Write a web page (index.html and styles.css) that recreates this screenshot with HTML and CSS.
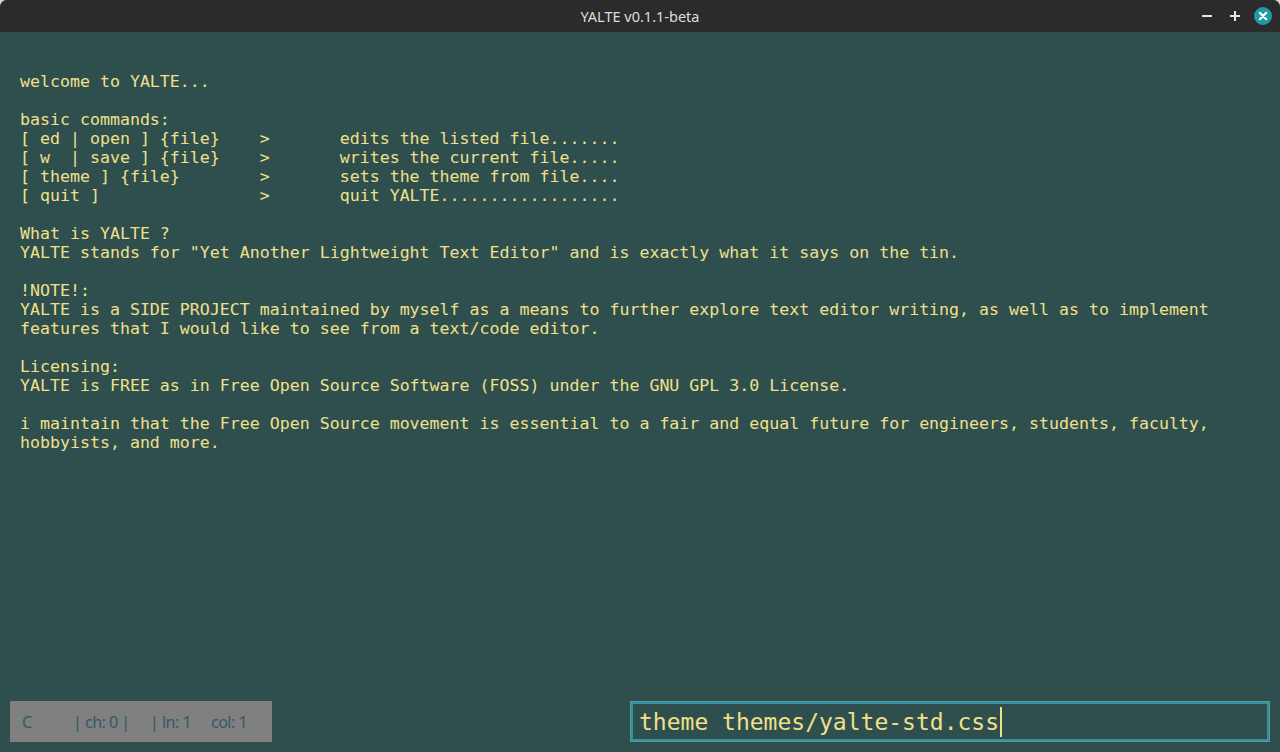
FILE: index.html
```html
<!DOCTYPE html>
<html>
<head>
<meta charset="utf-8">
<title>YALTE v0.1.1-beta</title>
<link rel="stylesheet" href="styles.css">
</head>
<body>
<div class="window">
  <header class="titlebar">
    <span class="title">YALTE v0.1.1-beta</span>
    <div class="controls">
      <span class="ctl minimize"><svg width="12" height="12" viewBox="0 0 12 12"><rect x="1" y="5" width="10" height="2" fill="#e6e6e6"/></svg></span>
      <span class="ctl maximize"><svg width="12" height="12" viewBox="0 0 12 12"><rect x="1" y="5" width="10" height="2" fill="#e6e6e6"/><rect x="5" y="1" width="2" height="10" fill="#e6e6e6"/></svg></span>
      <span class="ctl close"><svg width="18" height="18" viewBox="0 0 18 18"><circle cx="9" cy="9" r="9" fill="#1f9aa8"/><path d="M5.8 5.8 L12.2 12.2 M12.2 5.8 L5.8 12.2" stroke="#ffffff" stroke-width="2.2" stroke-linecap="round"/></svg></span>
    </div>
  </header>
  <main class="editor"><div class="buffer">welcome to YALTE...

basic commands:
[ ed | open ] {file}    >       edits the listed file.......
[ w  | save ] {file}    >       writes the current file.....
[ theme ] {file}        >       sets the theme from file....
[ quit ]                >       quit YALTE..................

What is YALTE ?
YALTE stands for "Yet Another Lightweight Text Editor" and is exactly what it says on the tin.

!NOTE!:
YALTE is a SIDE PROJECT maintained by myself as a means to further explore text editor writing, as well as to implement
features that I would like to see from a text/code editor.

Licensing:
YALTE is FREE as in Free Open Source Software (FOSS) under the GNU GPL 3.0 License.

i maintain that the Free Open Source movement is essential to a fair and equal future for engineers, students, faculty,
hobbyists, and more.</div></main>
  <footer class="bottom">
    <div class="status">
      <span class="st-lang">C</span>
      <span class="st-ch">| ch: 0 |</span>
      <span class="st-ln">| ln: 1</span>
      <span class="st-col">col: 1</span>
    </div>
    <div class="command"><span class="cmd-text">theme themes/yalte-std.css</span><span class="caret"></span></div>
  </footer>
</div>
</body>
</html>
```
FILE: styles.css
```css
html, body {
  margin: 0;
  padding: 0;
  background: #d8d8d8;
}
.window {
  width: 1280px;
  height: 752px;
  display: flex;
  flex-direction: column;
  background: #2f4f4f;
  border-radius: 7px 7px 0 0;
  overflow: hidden;
}
.titlebar {
  height: 32px;
  flex: 0 0 32px;
  background: #2b2b2b;
  display: flex;
  align-items: center;
  justify-content: center;
  position: relative;
}
.title {
  font-family: "Noto Sans", "Open Sans", sans-serif;
  font-size: 14.5px;
  color: #dedede;
}
.controls {
  position: absolute;
  right: 8px;
  top: 0;
  height: 32px;
  display: flex;
  align-items: center;
  gap: 10px;
}
.ctl {
  display: flex;
  align-items: center;
  justify-content: center;
  width: 18px;
  height: 18px;
}
.editor {
  flex: 1;
  padding: 40px 20px 0;
  overflow: hidden;
}
.buffer {
  font-family: "DejaVu Sans Mono", monospace;
  font-size: 16.6px;
  line-height: 19px;
  color: #f0e08a;
  white-space: pre-wrap;
}
.bottom {
  display: flex;
  justify-content: space-between;
  align-items: flex-end;
  padding: 0 10px 10px;
}
.status {
  width: 262px;
  height: 41px;
  box-sizing: border-box;
  background: #808080;
  display: flex;
  align-items: center;
  padding-left: 12px;
  font-family: "Noto Sans", "Open Sans", sans-serif;
  font-size: 16px;
  letter-spacing: -0.5px;
  color: #2f5a66;
}
.st-lang { width: 51px; }
.st-ch { width: 77px; }
.st-ln { width: 61px; }
.command {
  width: 640px;
  height: 41px;
  box-sizing: border-box;
  border: 1px solid #7d8a8a;
  box-shadow: inset 0 0 0 2px #1f9aa8;
  display: flex;
  align-items: center;
  padding-left: 8px;
  font-family: "DejaVu Sans Mono", monospace;
  font-size: 23px;
  color: #f0e08a;
}
.caret {
  display: inline-block;
  width: 2px;
  height: 30px;
  margin-left: 1px;
  background: #f0e08a;
}
```
